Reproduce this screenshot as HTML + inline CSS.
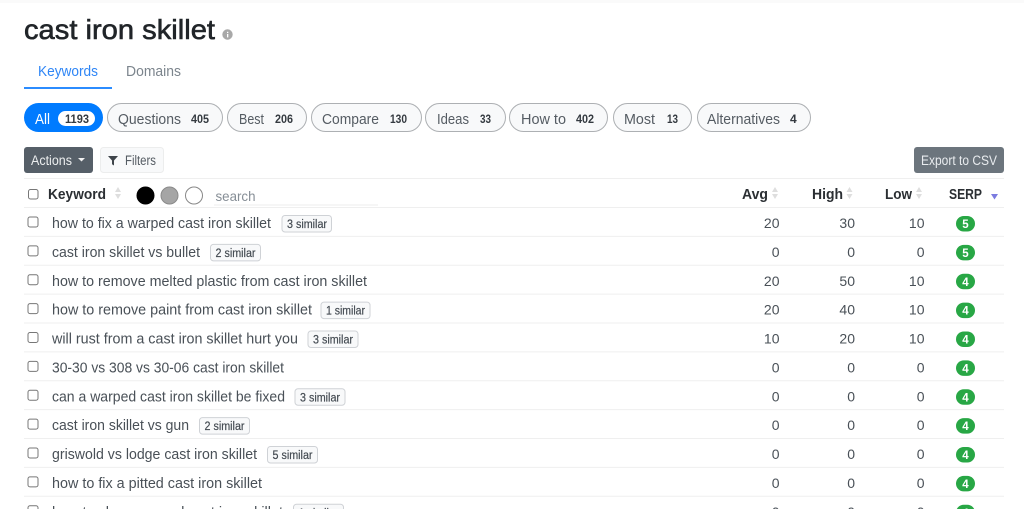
<!DOCTYPE html>
<html lang="en"><head><meta charset="utf-8"><title>cast iron skillet</title>
<style>
html,body{margin:0;padding:0;background:#fff;width:1024px;height:509px;overflow:hidden}
svg{display:block}
text{font-family:"Liberation Sans",sans-serif}
.k{font-size:14.5px;fill:#495057}
.n{font-size:14px;fill:#495057;text-anchor:end}
.s{font-size:11.5px;fill:#444b52;stroke:#444b52;stroke-width:.2}
.sb{fill:#f8f9fa;stroke:#cfd2d6}
.cb{fill:#fff;stroke:#777;stroke-width:1}
.gb{fill:#28a745}
.gt{font-size:11.5px;font-weight:bold;fill:#fff;text-anchor:middle}
.ln{stroke:#efefef;stroke-width:1}
.p{fill:#f8f9fa;stroke:#adb0b3}
.pt{font-size:14.5px;fill:#555c63}
.pn{font-size:12px;font-weight:bold;fill:#343a40}
.h{font-size:14.5px;font-weight:bold;fill:#2b2f33}
.ar{fill:#dedede}
</style></head><body>
<svg width="1024" height="509" viewBox="0 0 1024 509" xmlns="http://www.w3.org/2000/svg">
<rect width="1024" height="3" fill="#fafafa"/>
<text x="24" y="39" font-size="28" fill="#212529" stroke="#212529" stroke-width=".6" textLength="191" lengthAdjust="spacingAndGlyphs">cast iron skillet</text>
<circle cx="227.500" cy="34.500" r="5.200" fill="#a8a8a8"/><rect x="227" y="34" width="1.300" height="3.400" fill="#fff"/><rect x="227" y="31.800" width="1.300" height="1.300" fill="#fff"/>
<text x="38" y="76" font-size="14.500" fill="#2f86f6" textLength="60" lengthAdjust="spacingAndGlyphs">Keywords</text>
<text x="126" y="76" font-size="14.500" fill="#7c858d" textLength="55" lengthAdjust="spacingAndGlyphs">Domains</text>
<rect x="24" y="87" width="88" height="2" fill="#2b8cff"/>

<rect x="24" y="103" width="79" height="29" rx="14.500" fill="#007bff"/>
<text x="35" y="124" font-size="14.500" fill="#fff" textLength="15" lengthAdjust="spacingAndGlyphs">All</text>
<rect x="58" y="111" width="37" height="15" rx="7.500" fill="#fff"/>
<text x="65" y="123" class="pn" textLength="24" lengthAdjust="spacingAndGlyphs">1193</text>

<rect class="p" x="107.500" y="103.500" width="115" height="28" rx="14"/>
<text class="pt" x="118" y="124" textLength="63" lengthAdjust="spacingAndGlyphs">Questions</text>
<text class="pn" x="191" y="123" textLength="18" lengthAdjust="spacingAndGlyphs">405</text>
<rect class="p" x="227.500" y="103.500" width="79" height="28" rx="14"/>
<text class="pt" x="239" y="124" textLength="25" lengthAdjust="spacingAndGlyphs">Best</text>
<text class="pn" x="275" y="123" textLength="18" lengthAdjust="spacingAndGlyphs">206</text>
<rect class="p" x="311.500" y="103.500" width="110" height="28" rx="14"/>
<text class="pt" x="322" y="124" textLength="57" lengthAdjust="spacingAndGlyphs">Compare</text>
<text class="pn" x="390" y="123" textLength="17" lengthAdjust="spacingAndGlyphs">130</text>
<rect class="p" x="425.500" y="103.500" width="80" height="28" rx="14"/>
<text class="pt" x="437" y="124" textLength="32" lengthAdjust="spacingAndGlyphs">Ideas</text>
<text class="pn" x="480" y="123" textLength="11" lengthAdjust="spacingAndGlyphs">33</text>
<rect class="p" x="509.500" y="103.500" width="98" height="28" rx="14"/>
<text class="pt" x="521" y="124" textLength="45" lengthAdjust="spacingAndGlyphs">How to</text>
<text class="pn" x="576" y="123" textLength="18" lengthAdjust="spacingAndGlyphs">402</text>
<rect class="p" x="613.500" y="103.500" width="78" height="28" rx="14"/>
<text class="pt" x="624" y="124" textLength="31" lengthAdjust="spacingAndGlyphs">Most</text>
<text class="pn" x="667" y="123" textLength="11" lengthAdjust="spacingAndGlyphs">13</text>
<rect class="p" x="697.500" y="103.500" width="113" height="28" rx="14"/>
<text class="pt" x="707" y="124" textLength="73" lengthAdjust="spacingAndGlyphs">Alternatives</text>
<text class="pn" x="790" y="123">4</text>

<rect x="24" y="147" width="69" height="26" rx="3" fill="#565f68"/>
<text x="31" y="165" font-size="13.500" fill="#eceeef" textLength="41" lengthAdjust="spacingAndGlyphs">Actions</text>
<path d="M78 158h7l-3.500 3.500z" fill="#f2f2f2"/>
<rect x="100.500" y="147.500" width="63" height="25" rx="3" fill="#f8f9fa" stroke="#eceded"/>
<path d="M108 156h10l-4 4.500v5l-2-1.300v-3.700z" fill="#3f454b"/>
<text x="125" y="165" font-size="13.500" fill="#555c63" textLength="31" lengthAdjust="spacingAndGlyphs">Filters</text>
<rect x="914" y="147" width="90" height="26" rx="3" fill="#6c757d"/>
<text x="921" y="165" font-size="13.500" fill="#e9ecef" textLength="76" lengthAdjust="spacingAndGlyphs">Export to CSV</text>
<line class="ln" x1="24" x2="1004" y1="178.500" y2="178.500"/>

<rect class="cb" x="28.500" y="189.500" width="9.500" height="9.500" rx="2"/>
<text class="h" x="48" y="199" textLength="58" lengthAdjust="spacingAndGlyphs">Keyword</text>
<path class="ar" d="M115 192l3-5 3 5zM115 194l3 5 3-5z"/>
<circle cx="145.500" cy="195.500" r="9" fill="#000"/>
<circle cx="169.500" cy="195.500" r="8.500" fill="#a5a5a5" stroke="#8a8a8a"/>
<circle cx="194" cy="195.500" r="8.500" fill="#fff" stroke="#888"/>
<text x="215.500" y="201" font-size="14" fill="#868e96" textLength="40" lengthAdjust="spacingAndGlyphs">search</text>
<line x1="214" x2="378" y1="205" y2="205" stroke="#eee"/>

<text class="h" x="742" y="199" textLength="26" lengthAdjust="spacingAndGlyphs">Avg</text>
<path class="ar" d="M772 192l3-5 3 5zM772 194l3 5 3-5z"/>
<text class="h" x="812" y="199" textLength="31" lengthAdjust="spacingAndGlyphs">High</text>
<path class="ar" d="M846.500 192l3-5 3 5zM846.500 194l3 5 3-5z"/>
<text class="h" x="885" y="199" textLength="27" lengthAdjust="spacingAndGlyphs">Low</text>
<path class="ar" d="M916 192l3-5 3 5zM916 194l3 5 3-5z"/>
<text class="h" x="949" y="199" textLength="33" lengthAdjust="spacingAndGlyphs">SERP</text>
<path d="M991 194h7l-3.500 5.500z" fill="#7b7be0"/>

<g>
<line class="ln" x1="24" x2="1004" y1="207.500" y2="207.500"/>
<rect class="cb" x="28" y="217" width="10" height="10" rx="2"/>
<text class="k" x="52" y="228" textLength="219" lengthAdjust="spacingAndGlyphs">how to fix a warped cast iron skillet</text>
<rect class="sb" x="282" y="215.500" width="49.500" height="16.500" rx="3"/><text class="s" x="287" y="228" textLength="40" lengthAdjust="spacingAndGlyphs">3 similar</text>
<text class="n" x="779.500" y="228">20</text><text class="n" x="855" y="228">30</text><text class="n" x="924.500" y="228">10</text>
<rect class="gb" x="956" y="216" width="19" height="15.500" rx="7.750"/><text class="gt" x="965.500" y="228">5</text>
</g>
<g transform="translate(0,28.875)">
<line class="ln" x1="24" x2="1004" y1="207.500" y2="207.500"/>
<rect class="cb" x="28" y="217" width="10" height="10" rx="2"/>
<text class="k" x="52" y="228" textLength="148" lengthAdjust="spacingAndGlyphs">cast iron skillet vs bullet</text>
<rect class="sb" x="210.500" y="215.500" width="50" height="16.500" rx="3"/><text class="s" x="215.500" y="228" textLength="40" lengthAdjust="spacingAndGlyphs">2 similar</text>
<text class="n" x="779.500" y="228">0</text><text class="n" x="855" y="228">0</text><text class="n" x="924.500" y="228">0</text>
<rect class="gb" x="956" y="216" width="19" height="15.500" rx="7.750"/><text class="gt" x="965.500" y="228">5</text>
</g>
<g transform="translate(0,57.750)">
<line class="ln" x1="24" x2="1004" y1="207.500" y2="207.500"/>
<rect class="cb" x="28" y="217" width="10" height="10" rx="2"/>
<text class="k" x="52" y="228" textLength="315" lengthAdjust="spacingAndGlyphs">how to remove melted plastic from cast iron skillet</text>
<text class="n" x="779.500" y="228">20</text><text class="n" x="855" y="228">50</text><text class="n" x="924.500" y="228">10</text>
<rect class="gb" x="956" y="216" width="19" height="15.500" rx="7.750"/><text class="gt" x="965.500" y="228">4</text>
</g>
<g transform="translate(0,86.625)">
<line class="ln" x1="24" x2="1004" y1="207.500" y2="207.500"/>
<rect class="cb" x="28" y="217" width="10" height="10" rx="2"/>
<text class="k" x="52" y="228" textLength="260" lengthAdjust="spacingAndGlyphs">how to remove paint from cast iron skillet</text>
<rect class="sb" x="321" y="215.500" width="49" height="16.500" rx="3"/><text class="s" x="326" y="228" textLength="39" lengthAdjust="spacingAndGlyphs">1 similar</text>
<text class="n" x="779.500" y="228">20</text><text class="n" x="855" y="228">40</text><text class="n" x="924.500" y="228">10</text>
<rect class="gb" x="956" y="216" width="19" height="15.500" rx="7.750"/><text class="gt" x="965.500" y="228">4</text>
</g>
<g transform="translate(0,115.500)">
<line class="ln" x1="24" x2="1004" y1="207.500" y2="207.500"/>
<rect class="cb" x="28" y="217" width="10" height="10" rx="2"/>
<text class="k" x="52" y="228" textLength="246" lengthAdjust="spacingAndGlyphs">will rust from a cast iron skillet hurt you</text>
<rect class="sb" x="308" y="215.500" width="50" height="16.500" rx="3"/><text class="s" x="313" y="228" textLength="40" lengthAdjust="spacingAndGlyphs">3 similar</text>
<text class="n" x="779.500" y="228">10</text><text class="n" x="855" y="228">20</text><text class="n" x="924.500" y="228">10</text>
<rect class="gb" x="956" y="216" width="19" height="15.500" rx="7.750"/><text class="gt" x="965.500" y="228">4</text>
</g>
<g transform="translate(0,144.375)">
<line class="ln" x1="24" x2="1004" y1="207.500" y2="207.500"/>
<rect class="cb" x="28" y="217" width="10" height="10" rx="2"/>
<text class="k" x="52" y="228" textLength="232" lengthAdjust="spacingAndGlyphs">30-30 vs 308 vs 30-06 cast iron skillet</text>
<text class="n" x="779.500" y="228">0</text><text class="n" x="855" y="228">0</text><text class="n" x="924.500" y="228">0</text>
<rect class="gb" x="956" y="216" width="19" height="15.500" rx="7.750"/><text class="gt" x="965.500" y="228">4</text>
</g>
<g transform="translate(0,173.250)">
<line class="ln" x1="24" x2="1004" y1="207.500" y2="207.500"/>
<rect class="cb" x="28" y="217" width="10" height="10" rx="2"/>
<text class="k" x="52" y="228" textLength="233" lengthAdjust="spacingAndGlyphs">can a warped cast iron skillet be fixed</text>
<rect class="sb" x="295" y="215.500" width="50" height="16.500" rx="3"/><text class="s" x="300" y="228" textLength="40" lengthAdjust="spacingAndGlyphs">3 similar</text>
<text class="n" x="779.500" y="228">0</text><text class="n" x="855" y="228">0</text><text class="n" x="924.500" y="228">0</text>
<rect class="gb" x="956" y="216" width="19" height="15.500" rx="7.750"/><text class="gt" x="965.500" y="228">4</text>
</g>
<g transform="translate(0,202.125)">
<line class="ln" x1="24" x2="1004" y1="207.500" y2="207.500"/>
<rect class="cb" x="28" y="217" width="10" height="10" rx="2"/>
<text class="k" x="52" y="228" textLength="137" lengthAdjust="spacingAndGlyphs">cast iron skillet vs gun</text>
<rect class="sb" x="199.500" y="215.500" width="50" height="16.500" rx="3"/><text class="s" x="204.500" y="228" textLength="40" lengthAdjust="spacingAndGlyphs">2 similar</text>
<text class="n" x="779.500" y="228">0</text><text class="n" x="855" y="228">0</text><text class="n" x="924.500" y="228">0</text>
<rect class="gb" x="956" y="216" width="19" height="15.500" rx="7.750"/><text class="gt" x="965.500" y="228">4</text>
</g>
<g transform="translate(0,231)">
<line class="ln" x1="24" x2="1004" y1="207.500" y2="207.500"/>
<rect class="cb" x="28" y="217" width="10" height="10" rx="2"/>
<text class="k" x="52" y="228" textLength="205" lengthAdjust="spacingAndGlyphs">griswold vs lodge cast iron skillet</text>
<rect class="sb" x="267.500" y="215.500" width="50" height="16.500" rx="3"/><text class="s" x="272.500" y="228" textLength="40" lengthAdjust="spacingAndGlyphs">5 similar</text>
<text class="n" x="779.500" y="228">0</text><text class="n" x="855" y="228">0</text><text class="n" x="924.500" y="228">0</text>
<rect class="gb" x="956" y="216" width="19" height="15.500" rx="7.750"/><text class="gt" x="965.500" y="228">4</text>
</g>
<g transform="translate(0,259.875)">
<line class="ln" x1="24" x2="1004" y1="207.500" y2="207.500"/>
<rect class="cb" x="28" y="217" width="10" height="10" rx="2"/>
<text class="k" x="52" y="228" textLength="210" lengthAdjust="spacingAndGlyphs">how to fix a pitted cast iron skillet</text>
<text class="n" x="779.500" y="228">0</text><text class="n" x="855" y="228">0</text><text class="n" x="924.500" y="228">0</text>
<rect class="gb" x="956" y="216" width="19" height="15.500" rx="7.750"/><text class="gt" x="965.500" y="228">4</text>
</g>
<g transform="translate(0,288.750)">
<line class="ln" x1="24" x2="1004" y1="207.500" y2="207.500"/>
<rect class="cb" x="28" y="217" width="10" height="10" rx="2"/>
<text class="k" x="52" y="228" textLength="231" lengthAdjust="spacingAndGlyphs">how to clean warped cast iron skillet</text>
<rect class="sb" x="293.500" y="215.500" width="50" height="16.500" rx="3"/><text class="s" x="298.500" y="228" textLength="40" lengthAdjust="spacingAndGlyphs">1 similar</text>
<text class="n" x="779.500" y="228">0</text><text class="n" x="855" y="228">0</text><text class="n" x="924.500" y="228">0</text>
<rect class="gb" x="956" y="216" width="19" height="15.500" rx="7.750"/><text class="gt" x="965.500" y="228">4</text>
</g>
</svg>
</body></html>
